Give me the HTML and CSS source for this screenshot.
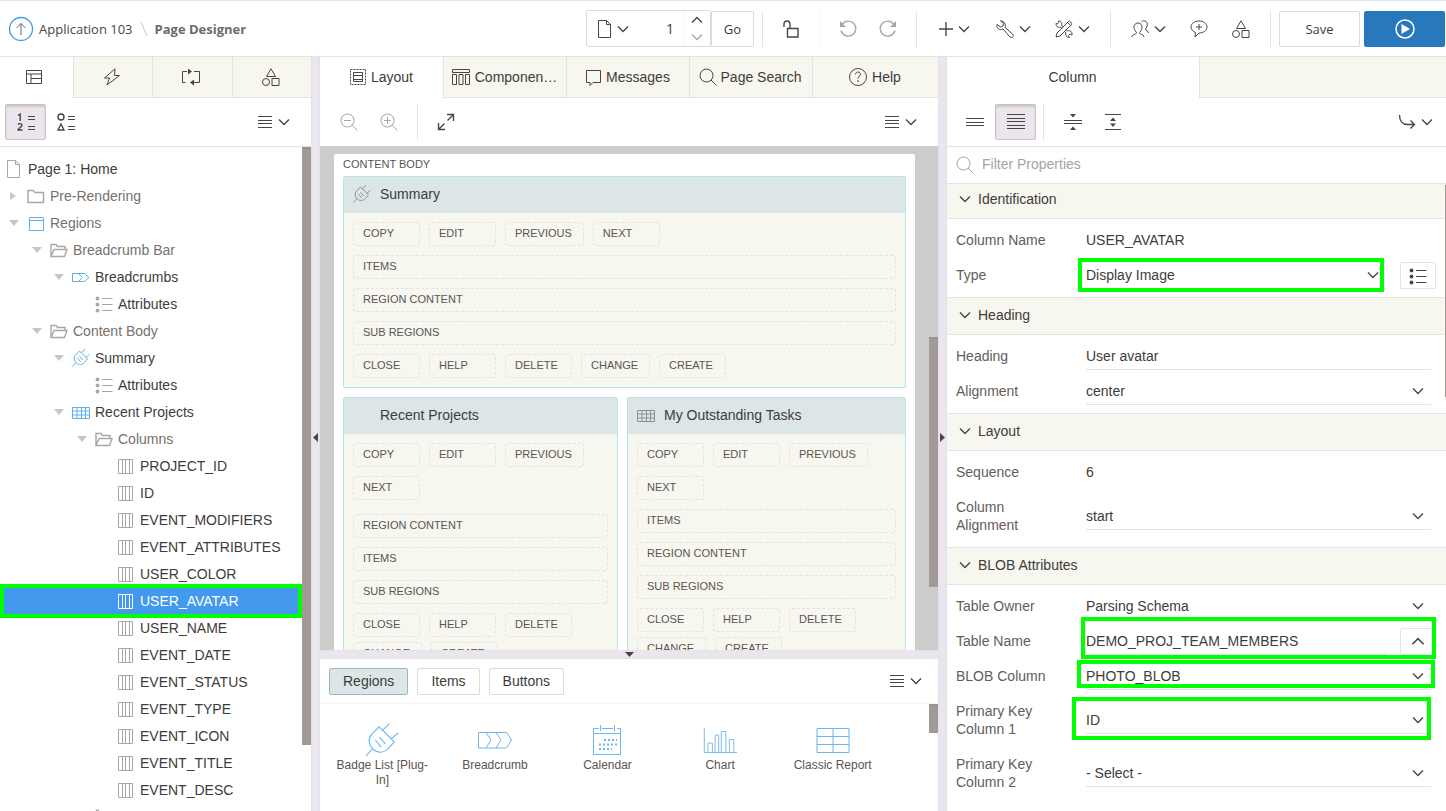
FILE: index.html
```html
<!DOCTYPE html>
<html lang="en">
<head>
<meta charset="utf-8">
<title>Page Designer</title>
<link rel="stylesheet" href="styles.css">
</head>
<body>
<svg class="defs" aria-hidden="true">
  <symbol id="chev" viewBox="0 0 12 8"><path class="heavy" d="M1 1.500l5 5 5-5"/></symbol>
  <symbol id="chev-up" viewBox="0 0 12 8"><path class="heavy" d="M1 6.500l5-5 5 5"/></symbol>
  <symbol id="page" viewBox="0 0 18 18"><path d="M2.500.5h8l4 4v13h-12zM10.500.5v4h4"/></symbol>
  <symbol id="folder" viewBox="0 0 18 18"><path class="heavy" d="M1 3.500h5l2 2h8.500v10H1z"/></symbol>
  <symbol id="folder-open" viewBox="0 0 18 18"><path class="heavy" d="M1 15V3.500h5l1.500 2h7.500v3M1 15.500l3-7h13l-2.500 7z"/></symbol>
  <symbol id="window" viewBox="0 0 18 18"><path d="M2.500 3.500h14v13h-14zM2.500 6.500h14"/></symbol>
  <symbol id="crumb" viewBox="0 0 18 18"><path d="M.5 5.500h12l4.500 4-4.500 4H.500zM6.500 5.500l4 4-4 4"/></symbol>
  <symbol id="list" viewBox="0 0 18 18"><path d="M7 3.500h10.500M7 9.500h10.500M7 15.500h10.500"/><circle class="bullet" cx="2.500" cy="3.500" r="1.900"/><circle class="bullet" cx="2.500" cy="9.500" r="1.900"/><circle class="bullet" cx="2.500" cy="15.500" r="1.900"/></symbol>
  <symbol id="plug" viewBox="0 0 18 18"><path d="M7.500 2l8 8-3 3.300c-2.300 2.500-5.300 3-8 .7s-3-5.500-.8-8.200zM9.300 3.800L13 .3M14 8.300l3.500-3M4 13.500L.5 17.500M5.500 9l3 3.800M7.500 7.300l3.300 3.700"/></symbol>
  <symbol id="grid" viewBox="0 0 18 18"><path d="M.5 4.500h17v11H.500zM.5 8h17M.5 12h17M5 4.500v11M9.500 4.500v11M13.500 4.500v11"/></symbol>
  <symbol id="cols" viewBox="0 0 18 18"><path d="M1.500 2.500h14v14h-14zM5.500 2.500v14M8.500 2.500v14M12.500 2.500v14"/></symbol>
  <symbol id="menu" viewBox="0 0 16 14"><path d="M1 1.500h14M1 5.500h14M1 8.500h14M1 12.500h14"/></symbol>
  <symbol id="mag" viewBox="0 0 18 18"><circle cx="7.500" cy="7.500" r="6.500"/><path d="M12 12l5.500 5.500"/></symbol>
  <symbol id="shapes" viewBox="0 0 18 18"><path d="M9 .8l4.500 7.700h-9zM10 10.500h7v7h-7z"/><circle cx="4" cy="14" r="3.500"/></symbol>
</svg>

<header class="topbar">
  <a class="home" href="#" aria-label="Application home"><svg viewBox="0 0 26 26" width="26" height="26"><circle cx="13" cy="13" r="11.500"/><path class="arrow" d="M13 19V7.500M8.500 12L13 7.500l4.500 4.500"/></svg></a>
  <nav class="crumbs"><a href="#">Application 103</a><svg class="slash" viewBox="0 0 8 14" width="8" height="14"><path d="M1 0l6 14"/></svg><strong>Page Designer</strong></nav>
  <div class="tools">
    <div class="pager">
      <button aria-label="Select page"><svg width="18" height="18"><use href="#page"/></svg><svg width="12" height="8"><use href="#chev"/></svg></button>
      <input type="text" value="1" aria-label="Page number">
      <div class="spin"><button aria-label="Next"><svg width="12" height="8"><use href="#chev-up"/></svg></button><button class="dim" aria-label="Previous"><svg width="12" height="8"><use href="#chev"/></svg></button></div>
    </div>
    <button class="box go">Go</button>
    <i class="sep"></i>
    <button class="tool" aria-label="Unlock"><svg viewBox="0 0 18 18" width="18" height="18"><path class="heavy" d="M5.500 8.500h10.500v8.500H5.500zM8 8.500V4.500C8 2.500 6.800 1 5 1S2 2.500 2 4.500V7"/></svg></button>
    <i class="sep faint"></i>
    <button class="tool dim" aria-label="Undo"><svg viewBox="0 0 18 18" width="18" height="18"><path class="heavy" d="M3 4.500a7.500 7.500 0 1 1-1 6"/><path class="solid" d="M1 1v6h6z"/></svg></button>
    <button class="tool dim" aria-label="Redo"><svg viewBox="0 0 18 18" width="18" height="18"><path class="heavy" d="M15 4.500a7.500 7.500 0 1 0 1 6"/><path class="solid" d="M17 1v6h-6z"/></svg></button>
    <i class="sep"></i>
    <button class="tool wide" aria-label="Create"><svg class="heavy" viewBox="0 0 14 14" width="14" height="14"><path d="M7 0v14M0 7h14"/></svg><svg width="12" height="8"><use href="#chev"/></svg></button>
    <button class="tool wide" aria-label="Utilities"><svg viewBox="0 0 18 18" width="18" height="18"><path d="M4.500.8L7.500 3.500 7 6 4.500 7 1 4.500C.3 7 2 10 5.500 9.500l1.500-.5 7 8c1 1 2.500.5 3-.3s.5-2-.5-2.700L9 7.500c1.200-3-.8-6.700-4.500-6.700z"/></svg><svg width="12" height="8"><use href="#chev"/></svg></button>
    <button class="tool wide" aria-label="Component settings"><svg viewBox="0 0 18 18" width="18" height="18"><path d="M1 17l1-4L13.500 1.500c1-1 4 1.500 3 3L5 16zM13 3l2.500 2M1 3.500C3 4.500 4 3 3.500 1c3 0 4 2 3 4l2 2M1 3.500C1 6.500 3 8 5.500 7l1.500 1.500M11 9.500l1.500 1.500c3-1 5 1 4.500 4l-2-1-1.500 1.500 1 2c-2.500 0-4.500-1.500-3.500-4.500L9.500 11.500"/></svg><svg width="12" height="8"><use href="#chev"/></svg></button>
    <i class="sep"></i>
    <button class="tool wide" aria-label="Team"><svg viewBox="0 0 18 18" width="18" height="18"><path d="M.8 17c0-3 4.700-2 4.700-4.500C3.500 10.500 3 8.500 3 7c0-2 1.500-4 4-4s4 2 4 4c0 1.500-.5 3.500-2.500 5.500C8.500 15 13 14 13 17M10.500 2c1-1.500 3-1.500 4.500-.5 2 1.500 1.500 5-.5 7.500 0 2 3 1.500 3 4"/></svg><svg width="12" height="8"><use href="#chev"/></svg></button>
    <button class="tool" aria-label="Comments"><svg viewBox="0 0 18 18" width="18" height="18"><path d="M9 1c4.500 0 8 2.600 8 6s-3.500 6-8 6l-4 4 .5-4.500C3 11.500 1 9.500 1 7c0-3.400 3.500-6 8-6zM9 4v6M6 7h6"/></svg></button>
    <button class="tool" aria-label="Shared components"><svg width="18" height="18"><use href="#shapes"/></svg></button>
    <i class="sep"></i>
    <button class="box save">Save</button>
    <button class="run" aria-label="Run page"><svg viewBox="0 0 20 20" width="20" height="20"><circle cx="10" cy="10" r="9"/><path class="solid" d="M6.500 5l8.500 5-8.500 5z"/></svg></button>
  </div>
</header>

<main class="work">
  <section class="pane">
    <div class="tabs tree-tabs">
      <button class="on" aria-label="Rendering"><svg viewBox="0 0 18 18" width="18" height="18"><path d="M1.500 2.500h15v13h-15zM1.500 6h15M6 6v9.500M6 10.500h10.500"/></svg></button>
      <button aria-label="Dynamic actions"><svg viewBox="0 0 18 18" width="18" height="18"><path d="M12 .8L1.500 10h5L4 17 16.500 7.500h-5z"/></svg></button>
      <button aria-label="Processing"><svg viewBox="0 0 20 18" width="20" height="18"><path d="M6 3.500H1.500v11h3M13 3.500h5.500v11H14M12.500 14.500H14"/><path class="solid" d="M7 .5l4 3-4 3zM13 11.500v6l-4-3z"/></svg></button>
      <button aria-label="Shared components"><svg width="18" height="18"><use href="#shapes"/></svg></button>
    </div>
    <div class="bar">
      <button class="tog on" aria-label="Order by sequence"><svg viewBox="0 0 18 18" width="18" height="18"><path class="heavy" d="M1 2.500L3.200 1v7M1 11.500c1-1.500 4-1 4 .7C5 14 1 15.500 1 17h4.500"/><path d="M11 3.500h7M11 6.500h7M11 13.500h7M11 16.500h7"/></svg></button>
      <button class="tog" aria-label="Order by type"><svg viewBox="0 0 18 18" width="18" height="18"><circle class="heavy" cx="4" cy="4" r="3"/><path class="heavy" d="M4 11l3 6H1z"/><path d="M11 3.500h7M11 6.500h7M11 13.500h7M11 16.500h7"/></svg></button>
      <button class="tool wide end" aria-label="Tree menu"><svg width="16" height="14"><use href="#menu"/></svg><svg width="12" height="8"><use href="#chev"/></svg></button>
    </div>
    <div class="scroller">
      <ul class="tree">
        <li class="l0"><svg class="ic"><use href="#page"/></svg>Page 1: Home</li>
        <li class="l1 closed soft"><svg class="ic"><use href="#folder"/></svg>Pre-Rendering</li>
        <li class="l1 open soft"><svg class="ic blue"><use href="#window"/></svg>Regions</li>
        <li class="l2 open soft"><svg class="ic"><use href="#folder-open"/></svg>Breadcrumb Bar</li>
        <li class="l3 open"><svg class="ic blue"><use href="#crumb"/></svg>Breadcrumbs</li>
        <li class="l4"><svg class="ic"><use href="#list"/></svg>Attributes</li>
        <li class="l2 open soft"><svg class="ic"><use href="#folder-open"/></svg>Content Body</li>
        <li class="l3 open"><svg class="ic blue"><use href="#plug"/></svg>Summary</li>
        <li class="l4"><svg class="ic"><use href="#list"/></svg>Attributes</li>
        <li class="l3 open"><svg class="ic blue"><use href="#grid"/></svg>Recent Projects</li>
        <li class="l4 open soft"><svg class="ic"><use href="#folder-open"/></svg>Columns</li>
        <li class="l5"><svg class="ic"><use href="#cols"/></svg>PROJECT_ID</li>
        <li class="l5"><svg class="ic"><use href="#cols"/></svg>ID</li>
        <li class="l5"><svg class="ic"><use href="#cols"/></svg>EVENT_MODIFIERS</li>
        <li class="l5"><svg class="ic"><use href="#cols"/></svg>EVENT_ATTRIBUTES</li>
        <li class="l5"><svg class="ic"><use href="#cols"/></svg>USER_COLOR</li>
        <li class="l5 picked"><svg class="ic"><use href="#cols"/></svg>USER_AVATAR</li>
        <li class="l5"><svg class="ic"><use href="#cols"/></svg>USER_NAME</li>
        <li class="l5"><svg class="ic"><use href="#cols"/></svg>EVENT_DATE</li>
        <li class="l5"><svg class="ic"><use href="#cols"/></svg>EVENT_STATUS</li>
        <li class="l5"><svg class="ic"><use href="#cols"/></svg>EVENT_TYPE</li>
        <li class="l5"><svg class="ic"><use href="#cols"/></svg>EVENT_ICON</li>
        <li class="l5"><svg class="ic"><use href="#cols"/></svg>EVENT_TITLE</li>
        <li class="l5"><svg class="ic"><use href="#cols"/></svg>EVENT_DESC</li>
        <li class="l4"><svg class="ic"><use href="#list"/></svg></li>
      </ul>
      <div class="track"><div class="thumb tree-thumb"></div></div>
    </div>
  </section>

  <div class="split"><svg viewBox="0 0 5 9" width="5" height="9"><path d="M5 0v9L0 4.500z"/></svg></div>

  <section class="pane">
    <div class="tabs layout-tabs">
      <button class="on"><svg viewBox="0 0 18 18" width="18" height="18"><path class="dots" d="M1.500 1.500h15v15h-15z"/><path d="M4.500 4.500h9v9h-9zM4.500 7.500h9M4.500 11.500h9"/></svg>Layout</button>
      <button><svg viewBox="0 0 20 18" width="20" height="18"><path d="M1.500 1.500h17v3h-17zM1.500 6.500h4v10h-4zM8 6.500h4v10H8zM14.500 6.500h4v10h-4z"/></svg>Componen…</button>
      <button><svg viewBox="0 0 18 18" width="18" height="18"><path d="M2.500 2.500h14v12H9l-3 3v-3H2.500z"/></svg>Messages</button>
      <button><svg width="18" height="18"><use href="#mag"/></svg>Page Search</button>
      <button><svg viewBox="0 0 20 20" width="20" height="20"><circle cx="10" cy="10" r="8.500"/><path d="M7.500 7.500c0-3.500 5-3 5-.3 0 2-2.500 2-2.500 4.300M10 13v2"/></svg>Help</button>
    </div>
    <div class="bar plain">
      <button class="tool dim" aria-label="Zoom out"><svg viewBox="0 0 18 18" width="18" height="18"><use href="#mag"/><path d="M4 7.500h7"/></svg></button>
      <button class="tool dim" aria-label="Zoom in"><svg viewBox="0 0 18 18" width="18" height="18"><use href="#mag"/><path d="M4 7.500h7M7.500 4v7"/></svg></button>
      <i class="sep"></i>
      <button class="tool" aria-label="Expand"><svg viewBox="0 0 18 18" width="18" height="18"><path class="heavy" d="M10 1.500h6.500V8M16.500 1.500L10.500 7.500M1.500 10v6.500H8M1.500 16.500l6-6"/></svg></button>
      <button class="tool wide end" aria-label="Layout menu"><svg width="16" height="14"><use href="#menu"/></svg><svg width="12" height="8"><use href="#chev"/></svg></button>
    </div>
    <div class="scroller canvas">
      <div class="sheet">
        <h2>CONTENT BODY</h2>
        <article class="region">
          <h3><svg class="ic"><use href="#plug"/></svg>Summary</h3>
          <div class="slots">
            <span>COPY</span><span>EDIT</span><span>PREVIOUS</span><span>NEXT</span>
            <span class="full">ITEMS</span><span class="full">REGION CONTENT</span><span class="full">SUB REGIONS</span>
            <span>CLOSE</span><span>HELP</span><span>DELETE</span><span>CHANGE</span><span>CREATE</span>
          </div>
        </article>
        <div class="pair">
          <article class="region">
            <h3><i class="ic"></i>Recent Projects</h3>
            <div class="slots">
              <span>COPY</span><span>EDIT</span><span>PREVIOUS</span><span>NEXT</span>
              <span class="full after-wrap">REGION CONTENT</span><span class="full">ITEMS</span><span class="full">SUB REGIONS</span>
              <span>CLOSE</span><span>HELP</span><span>DELETE</span>
            </div>
            <div class="slots more"><span>CHANGE</span><span>CREATE</span></div>
          </article>
          <article class="region">
            <h3><svg class="ic"><use href="#grid"/></svg>My Outstanding Tasks</h3>
            <div class="slots">
              <span>COPY</span><span>EDIT</span><span>PREVIOUS</span><span>NEXT</span>
              <span class="full">ITEMS</span><span class="full">REGION CONTENT</span><span class="full">SUB REGIONS</span>
              <span>CLOSE</span><span>HELP</span><span>DELETE</span>
            </div>
            <div class="slots more"><span>CHANGE</span><span>CREATE</span></div>
          </article>
        </div>
      </div>
      <div class="track"><div class="thumb canvas-thumb"></div></div>
    </div>
    <div class="split flat"><svg viewBox="0 0 9 5" width="9" height="5"><path d="M0 0h9L4.500 5z"/></svg></div>
    <div class="gallery">
      <div class="kinds">
        <button class="on">Regions</button><button>Items</button><button>Buttons</button>
        <button class="tool wide end" aria-label="Gallery menu"><svg width="16" height="14"><use href="#menu"/></svg><svg width="12" height="8"><use href="#chev"/></svg></button>
      </div>
      <div class="scroller">
        <ul class="items">
          <li><svg viewBox="0 0 18 18"><use href="#plug"/></svg>Badge List [Plug-In]</li>
          <li><svg viewBox="0 0 34 34"><path d="M.5 9.500h28l5 7.500-5 8H.500zM8 9.500l5 7.500-5 8M18 9.500l5 7.500-5 8"/></svg>Breadcrumb</li>
          <li><svg viewBox="0 0 34 34"><path d="M9 5.500H3.500v26h27v-26H27M12 5.500h11M3.500 10.500h27M10.500 2v6M24.500 2v6"/><path class="days" d="M14 17h13M9 21.500h18M9 26h13"/></svg>Calendar</li>
          <li><svg viewBox="0 0 38 34"><path d="M1.500 4v27H38M5.500 31V20.500h5V31M13.500 31V11.500h4V31M20.500 31V7.500h5V31M29.500 31V16.500h5V31"/></svg>Chart</li>
          <li><svg viewBox="0 0 34 34"><path d="M1 5.500h32v24H1zM1 13.500h32M1 21.500h32M17 5.500v24"/></svg>Classic Report</li>
        </ul>
        <div class="track"><div class="thumb gallery-thumb"></div></div>
      </div>
    </div>
  </section>

  <div class="split"><svg viewBox="0 0 5 9" width="5" height="9"><path d="M0 0v9l5-4.500z"/></svg></div>

  <section class="pane props">
    <div class="tabs half"><button class="on">Column</button><span></span></div>
    <div class="bar">
      <button class="tog" aria-label="Show common"><svg viewBox="0 0 18 18" width="18" height="18"><path d="M0 5.500h18M0 9.500h18M0 12.500h18"/></svg></button>
      <button class="tog on" aria-label="Show all"><svg viewBox="0 0 18 18" width="18" height="18"><path d="M0 1.500h18M0 5.500h18M0 8.500h18M0 12.500h18M0 15.500h18"/></svg></button>
      <i class="sep"></i>
      <button class="tool" aria-label="Collapse all"><svg viewBox="0 0 18 18" width="18" height="18"><path d="M0 7.500h18M0 10.500h18"/><path class="solid" d="M6 1h6L9 4.500zM6 17h6l-3-3.500z"/></svg></button>
      <button class="tool" aria-label="Expand all"><svg viewBox="0 0 18 18" width="18" height="18"><path d="M1 1.500h16M1 16.500h16"/><path class="solid" d="M6 8h6L9 4.500zM6 10.500h6L9 14z"/></svg></button>
      <button class="tool wide end" aria-label="Go to"><svg viewBox="0 0 18 18" width="18" height="18"><path class="heavy" d="M1.500 2c0 6 3 9.500 8 9.500h7M12.500 7.500l4 4-4 4"/></svg><svg width="12" height="8"><use href="#chev"/></svg></button>
    </div>
    <label class="filter"><svg width="18" height="18"><use href="#mag"/></svg><input type="text" placeholder="Filter Properties"></label>
    <div class="groups">
      <h4 class="first"><svg width="12" height="8"><use href="#chev"/></svg>Identification</h4>
      <div class="group">
        <div class="row"><span class="name">Column Name</span><div class="val"><output>USER_AVATAR</output></div></div>
        <div class="row"><label class="name" for="type">Type</label><div class="val"><div class="pick"><select id="type"><option>Display Image</option></select><svg width="12" height="8"><use href="#chev"/></svg></div><button class="side" aria-label="Quick pick"><svg width="18" height="18"><use href="#list"/></svg></button><i class="mark m-type"></i></div></div>
      </div>
      <h4><svg width="12" height="8"><use href="#chev"/></svg>Heading</h4>
      <div class="group">
        <div class="row"><label class="name" for="heading">Heading</label><div class="val"><input class="text" id="heading" type="text" value="User avatar"></div></div>
        <div class="row"><label class="name" for="align">Alignment</label><div class="val"><div class="pick"><select id="align"><option>center</option></select><svg width="12" height="8"><use href="#chev"/></svg></div></div></div>
      </div>
      <h4><svg width="12" height="8"><use href="#chev"/></svg>Layout</h4>
      <div class="group">
        <div class="row"><span class="name">Sequence</span><div class="val"><output>6</output></div></div>
        <div class="row"><label class="name" for="calign">Column Alignment</label><div class="val"><div class="pick"><select id="calign"><option>start</option></select><svg width="12" height="8"><use href="#chev"/></svg></div></div></div>
      </div>
      <h4><svg width="12" height="8"><use href="#chev"/></svg>BLOB Attributes</h4>
      <div class="group last">
        <div class="row"><label class="name" for="owner">Table Owner</label><div class="val"><div class="pick"><select id="owner"><option>Parsing Schema</option></select><svg width="12" height="8"><use href="#chev"/></svg></div></div></div>
        <div class="row"><label class="name" for="table">Table Name</label><div class="val"><input class="text" id="table" type="text" value="DEMO_PROJ_TEAM_MEMBERS"><button class="side" aria-label="List of tables"><svg width="14" height="9"><use href="#chev-up"/></svg></button><i class="mark m-table"></i></div></div>
        <div class="row"><label class="name" for="blob">BLOB Column</label><div class="val"><div class="pick"><select id="blob"><option>PHOTO_BLOB</option></select><svg width="12" height="8"><use href="#chev"/></svg></div><i class="mark m-blob"></i></div></div>
        <div class="row"><label class="name" for="pk1">Primary Key Column 1</label><div class="val"><div class="pick"><select id="pk1"><option>ID</option></select><svg width="12" height="8"><use href="#chev"/></svg></div><i class="mark m-key"></i></div></div>
        <div class="row"><label class="name" for="pk2">Primary Key Column 2</label><div class="val"><div class="pick"><select id="pk2"><option>- Select -</option></select><svg width="12" height="8"><use href="#chev"/></svg></div></div></div>
      </div>
      <div class="thumb prop-thumb"></div>
    </div>
  </section>
</main>
</body>
</html>
```
FILE: styles.css
```css
* { box-sizing: border-box; }

:root {
  --line: #dce6e7;
  --cream: #f7f6ef;
  --lilac: #ede5ed;
  --ink: #4a4543;
  --green: #00ff00;
}

body {
  margin: 0;
  height: 100vh;
  display: flex;
  flex-direction: column;
  overflow: hidden;
  background: #fff;
  color: #403c3a;
  font: 14px/18px "Liberation Sans", Arial, sans-serif;
}

button, input, select {
  margin: 0;
  padding: 0;
  border: 0;
  background: none;
  color: inherit;
  font: inherit;
}

ul, h2, h3, h4 { margin: 0; padding: 0; font-weight: normal; list-style: none; }

svg { fill: none; stroke: var(--ink); stroke-width: 1; flex: none; color: var(--ink); }
.defs { position: absolute; width: 0; height: 0; }
.solid { fill: var(--ink); stroke: none; }
.bullet { fill: currentColor; stroke: none; }
.heavy { stroke-width: 1.4; }
.dim svg { stroke: #a8a5a3; }
.dim .solid { fill: #a8a5a3; }

/* Top bar */
.topbar {
  flex: none;
  display: flex;
  align-items: center;
  height: 57px;
  padding: 0 1px 0 8px;
  border-top: 1px solid var(--line);
  border-bottom: 1px solid var(--line);
  font: 13px/18px "Open Sans", "Noto Sans", sans-serif;
}
.home { display: flex; }
.home circle { stroke: #3f98e8; stroke-width: 1.3; }
.home .arrow { stroke: #5a6484; }
.crumbs { display: flex; align-items: center; padding-left: 5px; }
.crumbs a { color: var(--ink); text-decoration: none; }
.crumbs strong { color: #6f6966; }
.slash { margin: 0 7px; stroke: #c9c5c2; }
.tools { display: flex; align-items: center; margin-left: auto; }
.tool { display: flex; align-items: center; justify-content: center; gap: 5px; height: 36px; width: 40px; }
.tool.wide { width: 58px; }
.tools .wide { width: 59px; }
.tools .wide ~ .tool:not(.wide) { width: 42px; }
.sep { width: 1px; height: 36px; margin: 0 8px; background: var(--line); }
.sep.faint { background: var(--cream); }
.pager { display: flex; width: 125px; height: 37px; border: 1px solid #dddcd3; border-radius: 2px 0 0 2px; }
.pager > button { display: flex; align-items: center; gap: 3px; padding-left: 9px; }
.pager input { flex: 1; width: 0; text-align: right; padding-right: 9px; font-size: 14px; }
.spin { display: flex; flex-direction: column; width: 27px; border-left: 1px solid var(--cream); }
.spin button { flex: 1; display: flex; align-items: center; justify-content: center; }
.box { height: 36px; border: 1px solid #dddcd3; border-radius: 2px; }
.go { width: 43px; }
.save { width: 81px; margin-right: 4px; }
.run { display: flex; align-items: center; justify-content: center; width: 81px; height: 36px; background: #2878be; border-radius: 2px; }
.run svg { stroke: #fff; stroke-width: 1.5; }
.run .solid { fill: #fff; }

/* Panes */
.work { flex: 1; min-height: 0; display: grid; grid-template-columns: 311px 9px minmax(0, 1fr) 9px 499px; }
.pane { display: flex; flex-direction: column; min-width: 0; min-height: 0; }
.split {
  display: flex;
  align-items: center;
  justify-content: center;
  padding-top: 6px;
  background: var(--lilac);
  border: solid var(--line);
  border-width: 0 1px;
}
.split svg { fill: var(--ink); stroke: none; }
.split.flat { flex: 0 0 9px; padding: 0; border-width: 1px 0; }

.tabs { flex: none; display: flex; height: 41px; }
.tabs > * {
  flex: 1;
  display: flex;
  align-items: center;
  justify-content: center;
  gap: 4px;
  padding-right: 2px;
  white-space: nowrap;
  background: var(--cream);
  border: solid var(--line);
  border-width: 0 0 1px 1px;
}
.tabs > .on { background: #fff; border-color: transparent; }
.tree-tabs > .on { flex: 0 0 73px; padding-right: 6px; }
.layout-tabs > :last-child { flex: 0 0 126px; }
.half > .on { flex: 0 0 252px; }
.half > span { border-left-width: 1px; }
.dots { stroke-dasharray: 2 1; }

.bar { flex: none; display: flex; align-items: center; height: 49px; padding: 0 9px 0 5px; border-bottom: 1px solid var(--line); }
.plain { padding-left: 9px; border-color: #ccc; }
.tog { display: flex; align-items: center; justify-content: center; width: 40px; height: 36px; border: 1px solid transparent; border-radius: 2px; }
.tog.on { width: 41px; background: var(--lilac); border-color: #c9c4c4; box-shadow: inset 0 2px 2px #cfcac9; }
.bar .end, .kinds .end { margin-left: auto; }
.props .bar { padding-left: 8px; padding-right: 2px; }
.props .sep { margin: 0 9px 0 7px; }

.scroller { flex: 1; min-height: 0; display: flex; overflow: hidden; }
.track { flex: none; width: 9px; }
.thumb { background: #a39a98; border-top: 2px solid #8f9694; }

/* Tree */
.tree { flex: 1; padding-top: 9px; }
.tree li { position: relative; display: flex; align-items: center; height: 27px; padding-bottom: 2px; white-space: nowrap; }
.ic { width: 18px; height: 18px; margin-right: 5px; stroke: #a9a6a4; color: #a9a6a4; flex: none; }
.blue { stroke: #5fb0ea; }
.soft { color: #76716e; }
.l0 { padding-left: 5px; }
.l1 { padding-left: 27px; }
.l2 { padding-left: 50px; }
.l3 { padding-left: 72px; }
.l4 { padding-left: 95px; }
.l5 { padding-left: 117px; }
.open::before, .closed::before {
  content: "";
  width: 0;
  height: 0;
  margin: 0 8px 0 -18px;
  border: 5px solid transparent;
  border-top: 6px solid #c9c6c4;
  border-bottom: 0;
}
.closed::before {
  margin: 0 11px 0 -17px;
  border: 4px solid transparent;
  border-left: 6px solid #c9c6c4;
  border-right: 0;
}
.tree .picked { background: #4299ee; color: #fff; }
.picked .ic { stroke: #fff; }
.picked::after { content: ""; position: absolute; inset: -4px 0 -3px; border: 4px solid var(--green); }
.tree-thumb { height: 90%; }

/* Layout canvas */
.canvas { background: #ccc; padding-top: 7px; }
.sheet { flex: 1; min-width: 0; align-self: flex-start; margin: 0 14px; padding: 0 9px 20px; background: #fff; border-radius: 2px 2px 0 0; color: #5a5552; font-size: 11px; }
.sheet h2 { height: 22px; line-height: 20px; font-size: 11px; }
.region { background: var(--cream); border: 1px solid #b6e3ee; border-radius: 2px; }
.region h3 { display: flex; align-items: center; height: 36px; padding: 0 0 2px 9px; background: var(--line); color: #403c3a; font-size: 14px; }
.region h3 .ic { margin-right: 9px; stroke: #8b919c; }
.pair { display: grid; grid-template-columns: 275fr 279fr; gap: 9px; margin-top: 9px; }
.slots { display: flex; flex-wrap: wrap; gap: 9px; padding: 9px; }
.slots span { min-width: 67px; height: 24px; padding: 0 11px 0 9px; line-height: 20px; border: 1px dashed var(--line); border-radius: 3px; }
.slots .full { flex: 0 0 100%; }
.slots .after-wrap { margin-top: 5px; }
.slots.more { padding-top: 0; margin-top: -4px; }
.canvas .track { height: 100%; padding-top: 183px; }
.canvas-thumb { height: 250px; }

/* Component gallery */
.gallery { flex: 0 0 152px; display: flex; flex-direction: column; }
.kinds { flex: none; display: flex; align-items: center; gap: 9px; height: 45px; padding: 0 4px 0 9px; border-bottom: 1px solid var(--cream); }
.kinds > button:not(.tool) { height: 27px; padding: 0 13px; border: 1px solid #dddcd3; border-radius: 2px; }
.kinds > .on:not(.tool) { background: var(--line); border-color: #9fb4c6; }
.items { flex: 1; display: grid; grid-template-columns: repeat(5, 1fr); align-content: start; padding: 19px 40px 0 6px; color: #5a5552; font-size: 12px; line-height: 15px; text-align: center; }
.items li { display: flex; flex-direction: column; align-items: center; padding: 0 8px; }
.items svg { width: 34px; height: 34px; margin-bottom: 1px; stroke: #6db6f0; }
.items li:first-child svg { stroke-width: .6; }
.items .days { stroke-width: 2; stroke-dasharray: 2 2; }
.gallery-thumb { height: 29px; }

/* Property editor */
.filter { flex: none; display: flex; align-items: center; height: 37px; padding-left: 9px; gap: 8px; border-bottom: 1px solid var(--line); }
.filter svg { stroke: #a8a5a3; }
.filter input { flex: 1; padding-bottom: 2px; }
.filter input::placeholder { color: #a8a3a0; opacity: 1; }
.groups { flex: 1; min-height: 0; position: relative; overflow: hidden; }
.groups h4 { display: flex; align-items: center; gap: 7px; height: 37px; padding: 0 0 2px 12px; background: var(--cream); border-bottom: 1px solid var(--line); }
.groups .first { height: 35px; padding-bottom: 4px; }
.group { padding: 4px 10px 4px 9px; border-bottom: 1px solid var(--line); }
.group.last { border: 0; }
.row { display: grid; grid-template-columns: 96px minmax(0, 1fr); column-gap: 34px; align-items: center; min-height: 35px; }
.row .name { color: #625d5a; padding: 8px 0 9px; }
.val { position: relative; align-self: stretch; display: flex; align-items: center; gap: 14px; }
.val output { padding-bottom: 1px; }
.pick { flex: 1; display: grid; grid-template-columns: 1fr 12px; align-items: center; height: 27px; padding-right: 7px; margin-right: 5px; border-bottom: 1px solid var(--line); }
.pick select { grid-area: 1 / 1 / 2 / 3; height: 26px; appearance: none; }
.pick svg { grid-area: 1 / 2; pointer-events: none; }
.text { flex: 1; min-width: 0; height: 27px; margin-right: 5px; border-bottom: 1px solid var(--line); }
.side { display: flex; align-items: center; justify-content: center; width: 36px; height: 27px; border: 1px solid var(--line); border-radius: 2px; }
.val:has(.side) > :first-child { margin-right: 0; }
.mark { position: absolute; border: 4px solid var(--green); pointer-events: none; }
.m-type { inset: 0 52px 1px -8px; }
.m-table { inset: -7px 0 0 -5px; }
.m-blob { inset: 1px 1px 6px -9px; }
.m-key { inset: 3px 5px 7px -14px; }
.prop-thumb { position: absolute; top: 1px; right: 0; width: 1px; height: 212px; }
```
